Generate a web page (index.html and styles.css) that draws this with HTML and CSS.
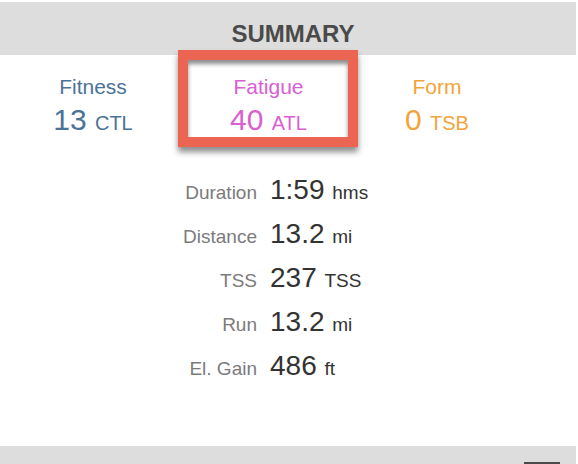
FILE: index.html
```html
<!DOCTYPE html>
<html>
<head>
	<title>Summary</title>
	<link rel="stylesheet" href="styles.css">
</head>
<body>
<section class="summary">
	<div class="summary-head">SUMMARY</div>
	<div class="load-row">
		<div class="load fitness">
			<div class="load-label">Fitness</div>
			<div class="load-value">13 <span class="load-unit">CTL</span></div>
		</div>
		<div class="load fatigue">
			<div class="load-label">Fatigue</div>
			<div class="load-value">40 <span class="load-unit">ATL</span></div>
			<div class="highlight"></div>
		</div>
		<div class="load form">
			<div class="load-label">Form</div>
			<div class="load-value">0 <span class="load-unit">TSB</span></div>
		</div>
	</div>
	<div class="stats">
		<div class="stat-label">Duration</div>
		<div class="stat-value">1:59 <span class="stat-unit">hms</span></div>
		<div class="stat-label">Distance</div>
		<div class="stat-value">13.2 <span class="stat-unit">mi</span></div>
		<div class="stat-label">TSS</div>
		<div class="stat-value">237 <span class="stat-unit">TSS</span></div>
		<div class="stat-label">Run</div>
		<div class="stat-value">13.2 <span class="stat-unit">mi</span></div>
		<div class="stat-label">El. Gain</div>
		<div class="stat-value">486 <span class="stat-unit">ft</span></div>
	</div>
</section>
<div class="footer-bar">
	<div class="footer-btn"></div>
</div>
</body>
</html>
```

FILE: styles.css
```css
body {
	margin: 0;
	padding-top: 2px;
	width: 576px;
	height: 462px;
	overflow: hidden;
	background: #fff;
	font-family: "Liberation Sans", Arial, sans-serif;
	display: flex;
	flex-direction: column;
}
.summary {
	flex: 1;
}
.summary-head {
	box-sizing: border-box;
	height: 53px;
	padding-top: 20px;
	background-color: #dddddd;
	color: #4a4a4a;
	font-size: 24px;
	font-weight: bold;
	line-height: 24px;
	text-align: center;
	padding-left: 10px;
}
.load-row {
	display: grid;
	grid-template-columns: 170px 181px 156px;
	padding-left: 8px;
	margin-top: 20px;
}
.load {
	position: relative;
	text-align: center;
}
.load-label {
	font-size: 21px;
	line-height: 24px;
}
.load-value {
	font-size: 30px;
	line-height: 36px;
	margin-top: 3px;
}
.load-unit {
	font-size: 20px;
}
.fitness {
	color: #4b7297;
}
.fatigue {
	color: #d95fd2;
}
.form {
	color: #f3a33b;
}
/* annotation box drawn over the fatigue cell */
.highlight {
	position: absolute;
	left: 0;
	top: -25px;
	width: 180px;
	height: 97px;
	box-sizing: border-box;
	border: 10px solid #ec6553;
	box-shadow: 0 5px 6px rgba(0,0,0,0.45), inset 0 4px 4px rgba(0,0,0,0.45);
}
.stats {
	display: grid;
	grid-template-columns: 100px auto;
	grid-auto-rows: 44px;
	column-gap: 13px;
	align-items: baseline;
	margin-left: 157px;
	margin-top: 27px;
}
.stat-label {
	text-align: right;
	color: #7b7b7b;
	font-size: 19px;
	line-height: 44px;
}
.stat-value {
	color: #333;
	font-size: 28px;
	line-height: 44px;
}
.stat-unit {
	font-size: 19px;
	line-height: 1;
}
.footer-bar {
	height: 18px;
	background-color: #dddddd;
	position: relative;
}
.footer-btn {
	position: absolute;
	left: 524px;
	bottom: 0;
	width: 36px;
	height: 2px;
	background: #4a4a4a;
}
```
